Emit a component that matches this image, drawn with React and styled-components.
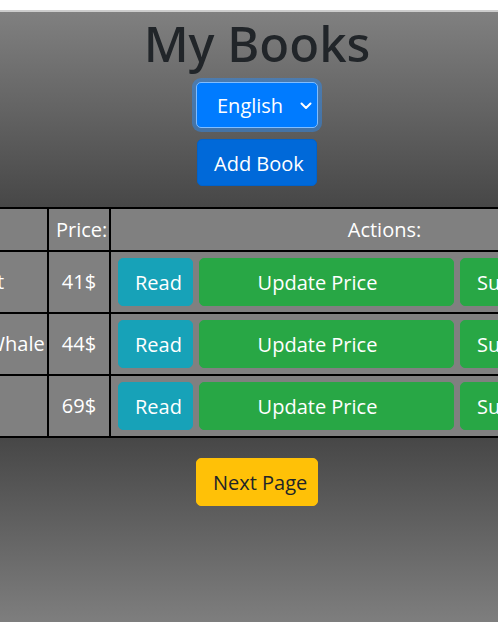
import React from 'react'
import styled, { createGlobalStyle } from 'styled-components'

const books = [
  { title: 'The Hobbit', price: 41 },
  { title: 'The Majestic Whale', price: 44 },
  { title: 'Emma', price: 69 }
]

const colors = {
  info: { bg: '#17a2b8', border: '#17a2b8', text: '#fff' },
  success: { bg: '#28a745', border: '#28a745', text: '#fff' },
  primary: { bg: '#0069d9', border: '#0062cc', text: '#fff' },
  warning: { bg: '#ffc107', border: '#ffc107', text: '#212529' }
}

const App = () => {
  return (
    <Page>
      <GlobalStyle />
      <Header>
        <Title>My Books</Title>
        <SelectWrap>
          <LanguageSelect defaultValue="en">
            <option value="en">English</option>
            <option value="he">עברית</option>
          </LanguageSelect>
          <Chevron width="12" height="8" viewBox="0 0 12 8">
            <path d="M1.5 1.5 L6 6 L10.5 1.5" fill="none" stroke="#fff" strokeWidth="2" strokeLinecap="round" strokeLinejoin="round" />
          </Chevron>
        </SelectWrap>
        <Button variant="primary" $width="120px" $height="47px" $mt="11px">Add Book</Button>
      </Header>

      <TableArea>
        <Table>
          <thead>
            <tr>
              <Th $width="191px">Title:</Th>
              <Th $width="62px">Price:</Th>
              <Th $width="549px">Actions:</Th>
            </tr>
          </thead>
          <tbody>
            { books.map(book => (
              <tr key={ book.title }>
                <Td>{ book.title }</Td>
                <Td>{ book.price }$</Td>
                <Td>
                  <Actions>
                    <Button variant="info" $width="75px">Read</Button>
                    <Button variant="success" $width="255px" $shift>Update Price</Button>
                    <Button variant="success">Submit</Button>
                  </Actions>
                </Td>
              </tr>
            )) }
          </tbody>
        </Table>
      </TableArea>

      <Footer>
        <Button variant="warning" $width="122px">Next Page</Button>
      </Footer>
    </Page>
  )
}

export default App

const GlobalStyle = createGlobalStyle`
  html, body {
    margin: 0;
    padding: 0;
    background: #fff;
    overflow: hidden;
  }

  body {
    font-family: "Open Sans", "Noto Sans", sans-serif;
  }

  * {
    box-sizing: border-box;
  }
`

const Page = styled.div`
  margin-top: 10px;
  border-top: 2px solid #cdcdcd;
  min-height: calc(100vh - 10px);
  display: flex;
  flex-direction: column;
`

const Header = styled.header`
  display: flex;
  flex-direction: column;
  align-items: center;
  padding: 0 0 21px 16px;
  background: linear-gradient(#808080, #474747);
`

const Title = styled.h1`
  margin: 0;
  font-family: "Noto Sans", "Open Sans", sans-serif;
  font-size: 49px;
  line-height: 62px;
  font-weight: 500;
  color: #212529;
`

const SelectWrap = styled.div`
  position: relative;
  display: inline-flex;
  margin-top: 8px;
`

const LanguageSelect = styled.select`
  appearance: none;
  width: 122px;
  height: 46px;
  padding: 0 28px 0 20px;
  font-family: inherit;
  font-size: 20px;
  color: #fff;
  background: #007bff;
  border: 1px solid #80bdff;
  border-radius: 5px;
  box-shadow: 0 0 0 4px rgba(38, 143, 255, 0.45);
  outline: none;
`

const Chevron = styled.svg`
  position: absolute;
  right: 6px;
  top: 20px;
  pointer-events: none;
`

const Button = styled.button`
  flex-shrink: 0;
  width: ${ p => p.$width || 'auto' };
  height: ${ p => p.$height || '48px' };
  margin-top: ${ p => p.$mt || '0' };
  padding: ${ p => p.$shift ? '9px 34px 7px 16px' : '9px 16px 7px' };
  font-family: inherit;
  font-size: 20px;
  line-height: 30px;
  white-space: nowrap;
  color: ${ p => colors[p.variant].text };
  background: ${ p => colors[p.variant].bg };
  border: 1px solid ${ p => colors[p.variant].border };
  border-radius: 5px;
  cursor: pointer;
`

const TableArea = styled.div`
  display: flex;
  justify-content: center;
  padding-left: 18px;
`

const Table = styled.table`
  flex-shrink: 0;
  width: 802px;
  table-layout: fixed;
  border-collapse: collapse;
  border: 2px solid #000;
  background: #808080;
  color: #fff;
  font-size: 20px;
  line-height: 30px;
`

const Th = styled.th`
  width: ${ p => p.$width };
  padding: 6px 7px 5px;
  font-weight: 400;
  text-align: center;
  border: 2px solid #000;
`

const Td = styled.td`
  padding: 6px 7px;
  text-align: center;
  vertical-align: middle;
  white-space: nowrap;
  border: 2px solid #000;
`

const Actions = styled.div`
  display: flex;
  gap: 6px;
`

const Footer = styled.footer`
  flex: 1;
  display: flex;
  justify-content: center;
  align-items: flex-start;
  padding: 20px 0 0 16px;
  background: linear-gradient(#474747, #7e7e7e);
`
